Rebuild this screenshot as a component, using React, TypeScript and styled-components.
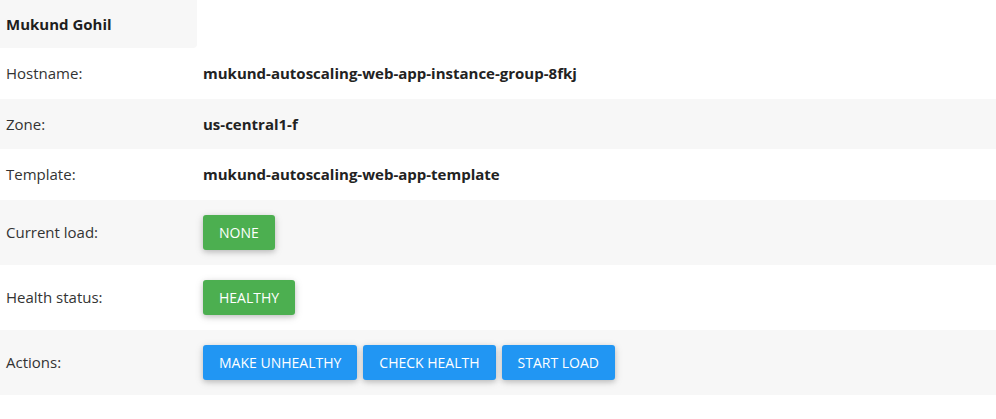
import React from "react";
import styled, { createGlobalStyle } from "styled-components";

const Global = createGlobalStyle`
  html, body { margin: 0; padding: 0; background: #fff; }
  body {
    font-family: "Open Sans", "Noto Sans", "Liberation Sans", sans-serif;
    font-size: 15px;
    color: #333;
  }
`;

const Page = styled.div`
  width: 996px;
  padding-bottom: 24px;
`;

const Table = styled.table`
  width: 100%;
  border-collapse: collapse;
  border-spacing: 0;
`;

const HeadCell = styled.th`
  width: 191px;
  height: 48px;
  padding: 0 0 0 6px;
  text-align: left;
  font-weight: 700;
  color: #1e1e1e;
  background: #f7f7f7;
  border-radius: 0 0 4px 0;
`;

const Row = styled.tr<{ $striped?: boolean }>`
  background: ${(p) => (p.$striped ? "#f7f7f7" : "#fff")};
`;

const LabelCell = styled.td<{ $tall?: boolean }>`
  padding: 0 0 0 6px;
  height: ${(p) => (p.$tall ? "65px" : "50.5px")};
  vertical-align: middle;
  color: #333;
`;

const ValueCell = styled.td`
  padding: 0 0 0 6px;
  vertical-align: middle;
  font-weight: 700;
  color: #222;
`;

const Buttons = styled.div`
  display: flex;
  gap: 6px;
`;

const Button = styled.button<{ $color: string }>`
  font-family: inherit;
  font-size: 14px;
  font-weight: 400;
  line-height: 19px;
  height: 35px;
  padding: 0 16px;
  border: none;
  border-radius: 3px;
  color: #fff;
  background: ${(p) => p.$color};
  box-shadow: 0 2px 5px 0 rgba(0, 0, 0, 0.16), 0 2px 10px 0 rgba(0, 0, 0, 0.12);
  text-transform: uppercase;
  cursor: pointer;
`;

const GREEN = "#4caf50";
const BLUE = "#2196f3";

export default function App() {
  return (
    <Page>
      <Global />
      <Table>
        <thead>
          <tr>
            <HeadCell>Mukund Gohil</HeadCell>
            <th />
          </tr>
        </thead>
        <tbody>
          <Row>
            <LabelCell>Hostname:</LabelCell>
            <ValueCell>mukund-autoscaling-web-app-instance-group-8fkj</ValueCell>
          </Row>
          <Row $striped>
            <LabelCell>Zone:</LabelCell>
            <ValueCell>us-central1-f</ValueCell>
          </Row>
          <Row>
            <LabelCell>Template:</LabelCell>
            <ValueCell>mukund-autoscaling-web-app-template</ValueCell>
          </Row>
          <Row $striped>
            <LabelCell $tall>Current load:</LabelCell>
            <ValueCell>
              <Button $color={GREEN}>None</Button>
            </ValueCell>
          </Row>
          <Row>
            <LabelCell $tall>Health status:</LabelCell>
            <ValueCell>
              <Button $color={GREEN}>Healthy</Button>
            </ValueCell>
          </Row>
          <Row $striped>
            <LabelCell $tall>Actions:</LabelCell>
            <ValueCell>
              <Buttons>
                <Button $color={BLUE}>Make unhealthy</Button>
                <Button $color={BLUE}>Check health</Button>
                <Button $color={BLUE}>Start load</Button>
              </Buttons>
            </ValueCell>
          </Row>
        </tbody>
      </Table>
    </Page>
  );
}
